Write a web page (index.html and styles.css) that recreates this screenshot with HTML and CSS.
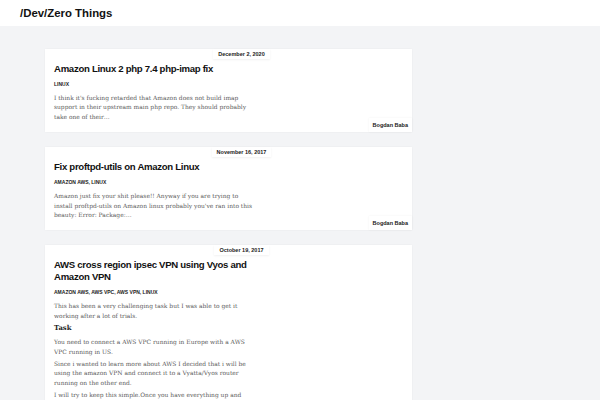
FILE: index.html
```html
<!DOCTYPE html>
<html>
<head>
<meta charset="utf-8">
<link rel="stylesheet" href="styles.css">
</head>
<body>
<header class="site-header">
  <span class="site-title">/Dev/Zero Things</span>
</header>
<main class="feed">
  <article class="card">
    <div class="date-row"><span class="date">December 2, 2020</span></div>
    <h2 class="post-title">Amazon Linux 2 php 7.4 php-imap fix</h2>
    <div class="tags">Linux</div>
    <div class="excerpt">
      <p>I think it's fucking retarded that Amazon does not build imap support in their upstream main php repo. They should probably take one of their…</p>
    </div>
    <div class="author-row"><span class="author">Bogdan Baba</span></div>
  </article>
  <article class="card">
    <div class="date-row"><span class="date">November 16, 2017</span></div>
    <h2 class="post-title">Fix proftpd-utils on Amazon Linux</h2>
    <div class="tags">Amazon AWS, Linux</div>
    <div class="excerpt">
      <p>Amazon just fix your shit please!! Anyway if you are trying to install proftpd-utils on Amazon linux probably you've ran into this beauty: Error: Package:…</p>
    </div>
    <div class="author-row"><span class="author">Bogdan Baba</span></div>
  </article>
  <article class="card">
    <div class="date-row"><span class="date">October 19, 2017</span></div>
    <h2 class="post-title">AWS cross region ipsec VPN using Vyos and Amazon VPN</h2>
    <div class="tags">Amazon AWS, AWS VPC, AWS VPN, Linux</div>
    <div class="excerpt">
      <p>This has been a very challenging task but I was able to get it working after a lot of trials.</p>
      <h3 class="sub">Task</h3>
      <p>You need to connect a AWS VPC running in Europe with a AWS VPC running in US.</p>
      <p>Since i wanted to learn more about AWS I decided that i will be using the amazon VPN and connect it to a Vyatta/Vyos router running on the other end.</p>
      <p>I will try to keep this simple.Once you have everything up and running you can start configuring.</p>
    </div>
  </article>
</main>
</body>
</html>
```
FILE: styles.css
```css
html, body {
  margin: 0;
  padding: 0;
}
body {
  background: #f3f4f6;
  font-family: "Liberation Sans", Arial, sans-serif;
  color: #111;
  overflow: hidden;
}
.site-header {
  height: 26px;
  background: #fff;
  display: flex;
  align-items: center;
  padding-left: 20px;
}
.site-title {
  font-size: 11.4px;
  font-weight: bold;
  color: #111;
}
.feed {
  padding: 23px 0 0 45px;
  display: flex;
  flex-direction: column;
  gap: 15px;
}
.card {
  width: 349px;
  background: #fff;
  padding: 0 9px;
  box-shadow: 0 0 2px rgba(0,0,0,0.05);
}
.date-row {
  display: flex;
  justify-content: center;
  padding-left: 26px;
}
.date {
  display: block;
  height: 10px;
  line-height: 10px;
  padding: 0 5px;
  font-size: 5.5px;
  font-weight: bold;
  color: #222;
  background: #fff;
  box-shadow: 0 1px 2px rgba(0,0,0,0.06);
}
.post-title {
  margin: 4px 0 0;
  font-size: 9.6px;
  letter-spacing: -0.3px;
  line-height: 12px;
  font-weight: bold;
  color: #111;
  max-width: 200px;
}
.tags {
  margin-top: 6px;
  font-size: 5px;
  line-height: 7px;
  font-weight: bold;
  text-transform: uppercase;
  color: #222;
}
.excerpt {
  margin-top: 5px;
  max-width: 200px;
  font-family: "DejaVu Serif", serif;
  font-size: 5.95px;
  line-height: 9.4px;
  color: #5c5c5c;
}
.excerpt p {
  margin: 0 0 3px;
}
.sub {
  margin: 2px 0 4px;
  font-size: 6.8px;
  line-height: 10px;
  font-weight: bold;
  color: #222;
}
.author-row {
  display: flex;
  justify-content: flex-end;
  margin: -6px -9px 0 0;
}
.author {
  display: block;
  height: 14px;
  line-height: 14px;
  padding: 0 4px;
  font-size: 5.5px;
  font-weight: bold;
  color: #222;
  background: #fff;
  box-shadow: 0 0 2px rgba(0,0,0,0.06);
}
```
